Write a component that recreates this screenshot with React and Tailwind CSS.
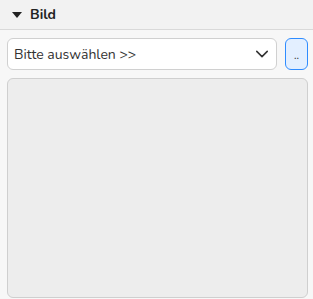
import React from 'react';

export default function App() {
  return (
    <div className="w-[313px] h-[299px] bg-[#f7f7f7] font-['Nunito','Lato','Noto_Sans',sans-serif] overflow-hidden">
      {/* Section header */}
      <div className="h-[30px] flex items-center gap-[8px] pl-[12px] bg-[#f2f2f2] border-b border-[#d9d9d9]">
        <svg width="10" height="6" viewBox="0 0 10 6">
          <path d="M0 0 L10 0 L5 6 Z" fill="#222" />
        </svg>
        <span className="text-[14px] font-bold text-[#222] leading-none">Bild</span>
      </div>

      <div className="pl-[7px] pr-[5px] pt-[8px] flex flex-col gap-[8px]">
        <div className="flex gap-[8px]">
          <div className="flex-1 h-[32px] flex items-center justify-between bg-white border border-[#d0d0d0] rounded-[6px] pl-[6px] pr-[7px]">
            <span className="text-[14px] text-[#333]">Bitte auswählen &gt;&gt;</span>
            <svg width="14" height="14" viewBox="0 0 16 16" fill="none">
              <path d="M2 5 L8 11 L14 5" stroke="#333" strokeWidth="1.8" strokeLinecap="round" strokeLinejoin="round" />
            </svg>
          </div>
          <button className="w-[23px] h-[32px] rounded-[6px] border border-[#2f8cff] bg-[#e3efff] text-[#333] text-[11px] leading-none flex items-center justify-center pt-[3px]">
            ..
          </button>
        </div>
        <div className="h-[220px] bg-[#ededed] border border-[#cfcfcf] rounded-[6px]" />
      </div>
    </div>
  );
}
